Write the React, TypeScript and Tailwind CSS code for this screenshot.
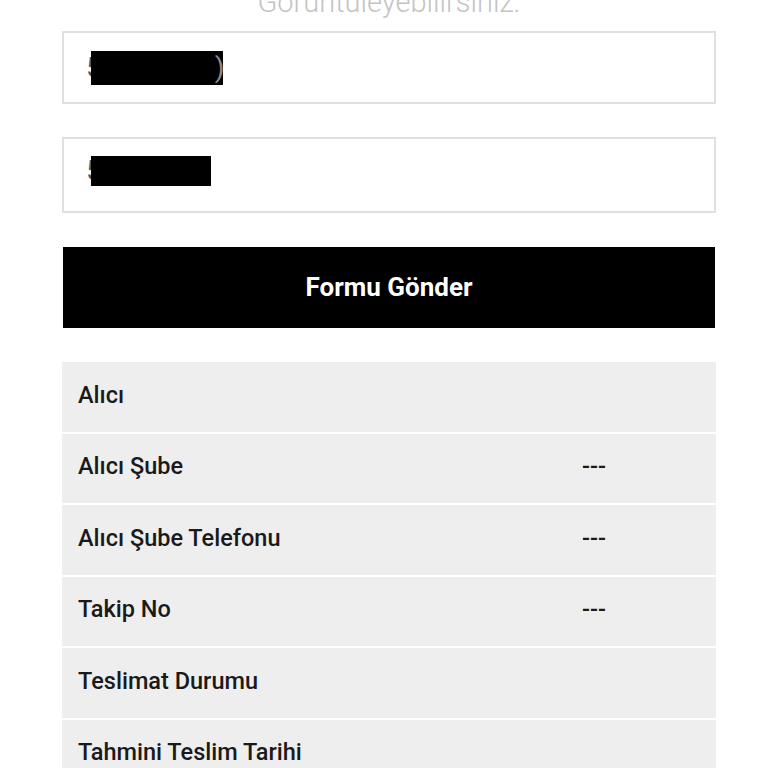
const ROWS: { label: string; value: string }[] = [
  { label: "Alıcı", value: "" },
  { label: "Alıcı Şube", value: "---" },
  { label: "Alıcı Şube Telefonu", value: "---" },
  { label: "Takip No", value: "---" },
  { label: "Teslimat Durumu", value: "" },
  { label: "Tahmini Teslim Tarihi", value: "" },
];

function Redacted({ head, box, tail, lift }: { head: string; box: string; tail?: string; lift?: boolean }) {
  return (
    <div className={`flex items-center pl-[22px] text-[28px] leading-none text-[#555] ${lift ? "pb-[8px]" : ""}`}>
      <span>{head}</span>
      <span className={`-ml-[11px] inline-block bg-black ${box}`} />
      {tail && <span className="-ml-[8px] text-[#888]">{tail}</span>}
    </div>
  );
}

export default function App() {
  return (
    <div
      className="h-[768px] w-[768px] overflow-hidden bg-white"
      style={{ fontFamily: "Roboto, 'Noto Sans', sans-serif" }}
    >
      <div className="ml-[62px] w-[654px]">
        <p className="-mt-[12px] mb-[14px] text-center text-[29px] font-light leading-[29px] text-[#c4c4c4]">
          Görüntüleyebilirsiniz.
        </p>

        <div className="flex h-[73px] items-center border-2 border-[#e0e0e0]">
          <Redacted head="5" box="h-[34px] w-[132px]" tail=")" />
        </div>

        <div className="mt-[33px] flex h-[76px] items-center border-2 border-[#e0e0e0]">
          <Redacted head="5" box="h-[30px] w-[120px]" lift />
        </div>

        <button
          type="button"
          className="mt-[34px] ml-px flex h-[81px] w-[652px] items-center justify-center bg-black text-[26px] font-bold text-white"
        >
          Formu Gönder
        </button>

        <div className="mt-[34px] flex flex-col gap-[2px]">
          {ROWS.map((row) => (
            <div
              key={row.label}
              className="flex h-[69.5px] items-center bg-[#eeeeee] pb-[3px] text-[23.5px] font-medium text-[#1a1a1a]"
            >
              <div className="w-[520px] pl-4">{row.label}</div>
              <div className="flex-1">{row.value}</div>
            </div>
          ))}
        </div>
      </div>
    </div>
  );
}
